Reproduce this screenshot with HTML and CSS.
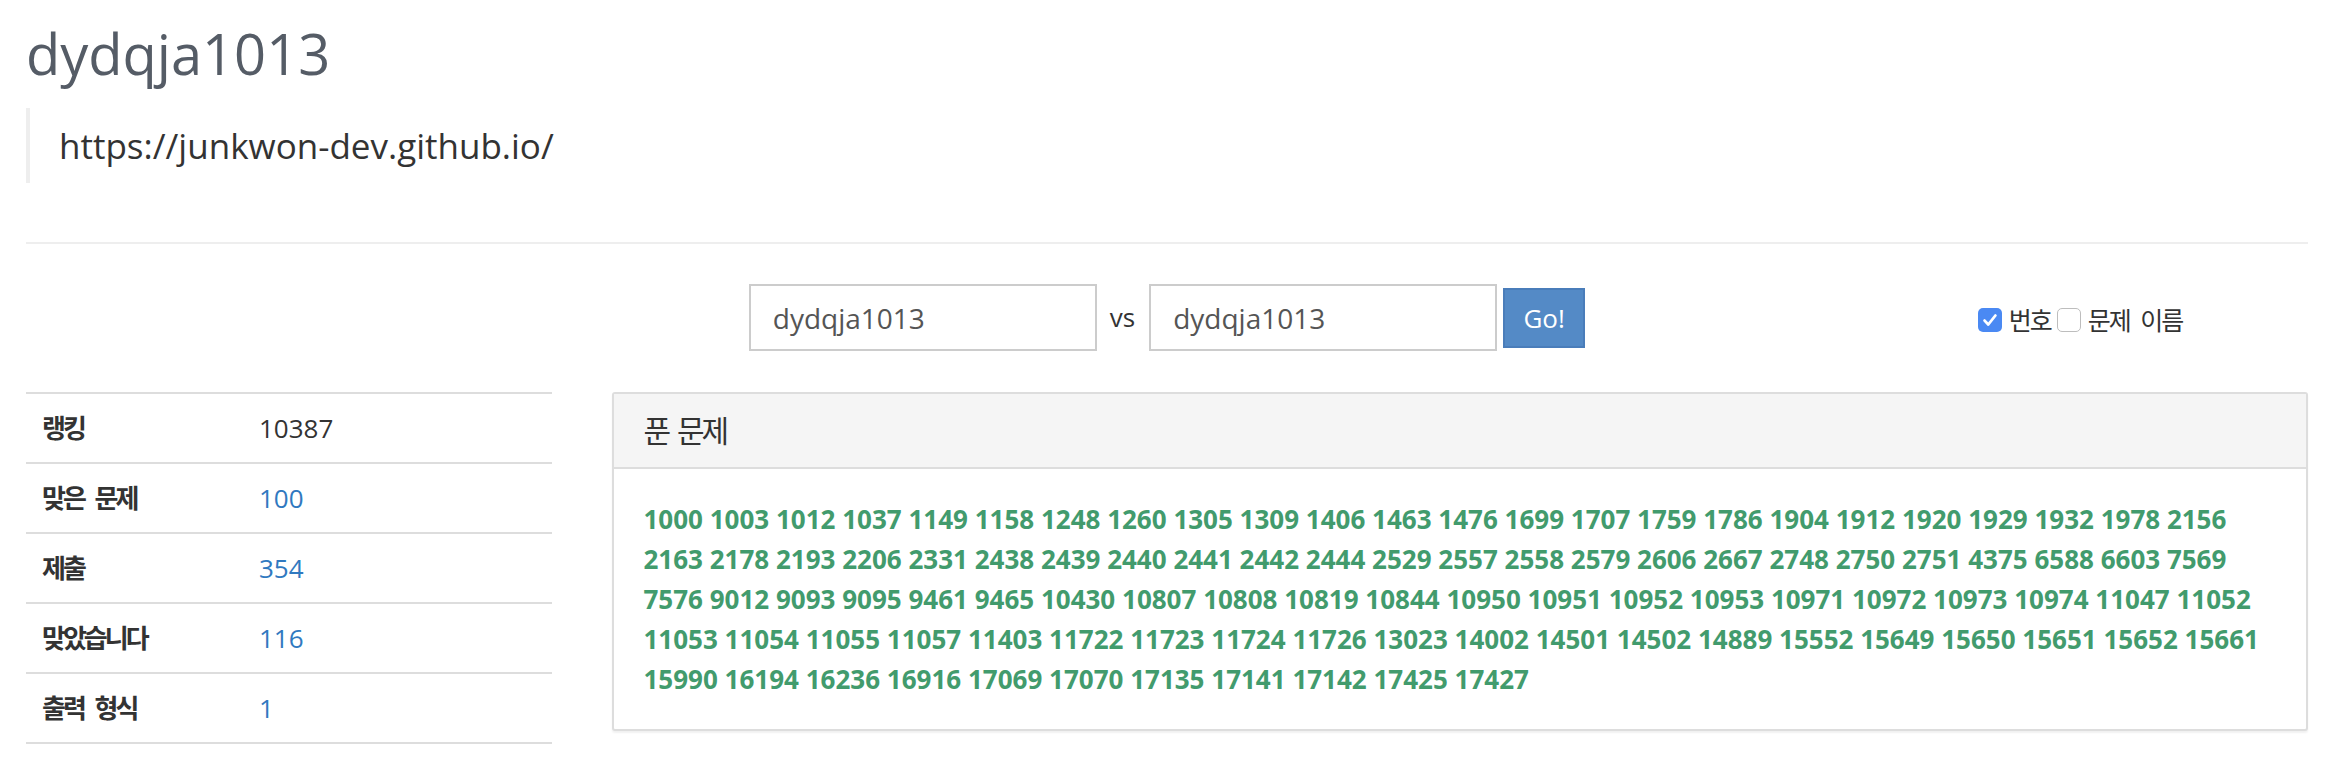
FILE: index.html
```html
<!DOCTYPE html>
<html lang="ko">
<head>
<meta charset="utf-8">
<title>dydqja1013</title>
<link rel="stylesheet" href="styles.css">
</head>
<body>
<div class="container">
  <div class="page-header">
    <h1 class="username">dydqja1013</h1>
    <blockquote class="status">https://junkwon-dev.github.io/</blockquote>
  </div>
  <hr class="divider">
  <div class="vs-row">
    <form class="vs-form">
      <input class="vs-input" type="text" value="dydqja1013">
      <span class="vs-label">vs</span>
      <input class="vs-input" type="text" value="dydqja1013">
      <button class="go-btn" type="button">Go!</button>
    </form>
    <div class="display-opts">
      <label class="opt"><span class="box checked"><svg viewBox="0 0 24 24" width="24" height="24"><path d="M6.6 12.6l3.7 3.9 7.1-9" fill="none" stroke="#fff" stroke-width="2.8" stroke-linecap="round" stroke-linejoin="round"/></svg></span><span class="opt-text">번호</span></label>
      <label class="opt"><span class="box"></span><span class="opt-text">문제 이름</span></label>
    </div>
  </div>
  <div class="main-row">
    <div class="stats-col">
      <table class="stats">
        <tr><th>랭킹</th><td>10387</td></tr>
        <tr><th>맞은 문제</th><td><a class="stat-link">100</a></td></tr>
        <tr><th>제출</th><td><a class="stat-link">354</a></td></tr>
        <tr><th>맞았습니다</th><td><a class="stat-link">116</a></td></tr>
        <tr><th>출력 형식</th><td><a class="stat-link">1</a></td></tr>
      </table>
    </div>
    <div class="problems-col">
      <div class="panel">
        <div class="panel-heading"><h3 class="panel-title">푼 문제</h3></div>
        <div class="panel-body problem-list">
<a>1000</a> <a>1003</a> <a>1012</a> <a>1037</a> <a>1149</a> <a>1158</a> <a>1248</a> <a>1260</a> <a>1305</a> <a>1309</a> <a>1406</a> <a>1463</a> <a>1476</a> <a>1699</a> <a>1707</a> <a>1759</a> <a>1786</a> <a>1904</a> <a>1912</a> <a>1920</a> <a>1929</a> <a>1932</a> <a>1978</a> <a>2156</a> <a>2163</a> <a>2178</a> <a>2193</a> <a>2206</a> <a>2331</a> <a>2438</a> <a>2439</a> <a>2440</a> <a>2441</a> <a>2442</a> <a>2444</a> <a>2529</a> <a>2557</a> <a>2558</a> <a>2579</a> <a>2606</a> <a>2667</a> <a>2748</a> <a>2750</a> <a>2751</a> <a>4375</a> <a>6588</a> <a>6603</a> <a>7569</a> <a>7576</a> <a>9012</a> <a>9093</a> <a>9095</a> <a>9461</a> <a>9465</a> <a>10430</a> <a>10807</a> <a>10808</a> <a>10819</a> <a>10844</a> <a>10950</a> <a>10951</a> <a>10952</a> <a>10953</a> <a>10971</a> <a>10972</a> <a>10973</a> <a>10974</a> <a>11047</a> <a>11052</a> <a>11053</a> <a>11054</a> <a>11055</a> <a>11057</a> <a>11403</a> <a>11722</a> <a>11723</a> <a>11724</a> <a>11726</a> <a>13023</a> <a>14002</a> <a>14501</a> <a>14502</a> <a>14889</a> <a>15552</a> <a>15649</a> <a>15650</a> <a>15651</a> <a>15652</a> <a>15661</a> <a>15990</a> <a>16194</a> <a>16236</a> <a>16916</a> <a>17069</a> <a>17070</a> <a>17135</a> <a>17141</a> <a>17142</a> <a>17425</a> <a>17427</a>
        </div>
      </div>
    </div>
  </div>
</div>
</body>
</html>
```

FILE: styles.css
```css
html, body {
  margin: 0;
  padding: 0;
  background: #fff;
}

body {
  font-family: "Open Sans", "Noto Sans CJK KR", sans-serif;
  font-size: 26px;
  line-height: 37px;
  color: #333;
}

.container {
  padding: 0 30px 0 26px;
}

.username {
  margin: 22.5px 0 0;
  font-size: 56px;
  line-height: 61.6px;
  font-weight: 400;
  color: #555c66;
}

.status {
  margin: 24.2px 0 0;
  padding: 13.5px 29px;
  border-left: 4px solid #eee;
  font-size: 35px;
  line-height: 48px;
  color: #333;
}

.divider {
  margin: 59px 0 40px;
  border: 0;
  border-top: 2px solid #eee;
  height: 0;
}

.vs-row {
  display: grid;
  grid-template-columns: repeat(12, 1fr);
  column-gap: 60px;
  align-items: center;
}

.vs-form {
  grid-column: 3 / 11;
  display: flex;
  justify-content: center;
  align-items: center;
  margin: 0;
}

.vs-input {
  box-sizing: border-box;
  width: 348px;
  height: 67px;
  margin: 0;
  padding: 0 22px;
  border: 2px solid #ccc;
  border-radius: 0;
  font-family: "Open Sans", sans-serif;
  font-size: 28px;
  color: #555;
  background: #fff;
  outline: none;
}

.vs-label {
  margin: 0 14px 0 13px;
  font-size: 26px;
  color: #333;
}

.go-btn {
  box-sizing: border-box;
  width: 82px;
  height: 60px;
  margin-left: 6px;
  padding: 0;
  border: 2px solid #4a7dba;
  border-radius: 0;
  background: #548ac6;
  color: #fff;
  font-family: "Open Sans", sans-serif;
  font-size: 26px;
}

.display-opts {
  grid-column: 11 / 13;
  display: flex;
  align-items: center;
  margin-top: 5px;
}

.opt {
  display: flex;
  align-items: center;
  margin-right: 6px;
}

.box {
  box-sizing: border-box;
  display: inline-flex;
  width: 24px;
  height: 24px;
  border-radius: 5px;
  border: 1.5px solid #bdbdbd;
  background: #fff;
  overflow: hidden;
}

.box.checked {
  border: 0;
  background: #4a89f3;
}

.opt-text {
  margin-left: 7px;
  font-size: 25px;
  letter-spacing: -2px;
  word-spacing: 6px;
  color: #333;
}

.main-row {
  margin-top: 41px;
  display: grid;
  grid-template-columns: repeat(12, 1fr);
  column-gap: 60px;
  align-items: start;
}

.stats-col {
  grid-column: 1 / 4;
}

.problems-col {
  grid-column: 4 / 13;
}

.stats {
  width: 100%;
  border-collapse: separate;
  border-spacing: 0;
}

.stats th,
.stats td {
  padding: 16px;
  line-height: 36px;
  text-align: left;
  vertical-align: middle;
  border-top: 2px solid #ddd;
}

.stats tr:last-child th,
.stats tr:last-child td {
  border-bottom: 2px solid #ddd;
}

.stats th {
  width: 217px;
  box-sizing: border-box;
  font-weight: 700;
  letter-spacing: -3px;
  word-spacing: 7px;
}

.stat-link {
  color: #3079c0;
}

.panel {
  border: 2px solid #ddd;
  border-radius: 3px;
  box-shadow: 0 2px 2px rgba(0, 0, 0, 0.06);
  background: #fff;
}

.panel-heading {
  padding: 20px 30px;
  background: #f5f5f5;
  border-bottom: 2px solid #ddd;
}

.panel-title {
  margin: 0;
  font-size: 30px;
  line-height: 33px;
  font-weight: 400;
  letter-spacing: -3px;
  word-spacing: 4px;
  color: #333;
}

.panel-body {
  padding: 30px;
}

.problem-list {
  font-size: 26px;
  line-height: 40px;
  font-weight: 700;
}

.problem-list a {
  color: #429b6d;
}
```
